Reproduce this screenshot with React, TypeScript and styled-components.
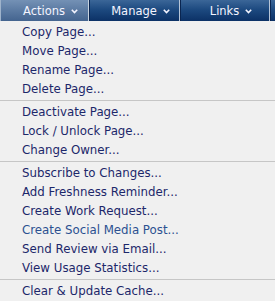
import React from "react";
import styled, { createGlobalStyle } from "styled-components";

const Global = createGlobalStyle`
  html, body { margin: 0; padding: 0; background: #f0f0f0; }
  body { font-family: "DejaVu Sans", Verdana, sans-serif; }
`;

const Page = styled.div`
  width: 275px;
  height: 301px;
  overflow: hidden;
  display: flex;
  flex-direction: column;
  background: #f0f0f0;
`;

const TabBar = styled.div`
  display: flex;
  height: 21px;
  background: #0b2a58;
  flex-shrink: 0;
`;

const Tab = styled.div<{ $active?: boolean; $w: number; $first?: boolean }>`
  box-sizing: border-box;
  width: ${(p) => p.$w}px;
  flex-shrink: 0;
  height: 21px;
  display: flex;
  align-items: center;
  justify-content: center;
  gap: 6px;
  padding-left: 12px;
  font-size: 11.5px;
  color: #f4f4ff;
  border-left: 1px solid ${(p) => (p.$first ? "#9fb3cb" : "#0a2550")};
  border-right: 1px solid ${(p) => (p.$active ? "#c5d1df" : "#b7c6d9")};
  background: ${(p) =>
    p.$active
      ? "linear-gradient(to bottom, #7491b5 0%, #5b7aa2 50%, #44648f 100%)"
      : "linear-gradient(to bottom, #3b6698 0%, #1d4a80 45%, #0c3166 100%)"};
`;

const Chevron = () => (
  <svg width="7" height="5" viewBox="0 0 7 5" style={{ marginTop: 2 }}>
    <polyline points="0.8,0.8 3.5,3.5 6.2,0.8" fill="none" stroke="#f4f4ff" strokeWidth="1.6" />
  </svg>
);

const Menu = styled.div`
  flex: 1;
  display: flex;
  flex-direction: column;
  padding-top: 2px;
  border-bottom: 1px solid #6e6e6e;
`;

const Item = styled.div<{ $alt?: boolean }>`
  height: 19px;
  line-height: 19px;
  padding-left: 22px;
  font-size: 11.8px;
  color: ${(p) => (p.$alt ? "#2c5090" : "#1c276a")};
  white-space: nowrap;
`;

const Sep = styled.div`
  height: 1px;
  margin: 1px 0 2px;
  background: #c6c6c6;
`;

const groups: { label: string; alt?: boolean }[][] = [
  [
    { label: "Copy Page..." },
    { label: "Move Page..." },
    { label: "Rename Page..." },
    { label: "Delete Page..." },
  ],
  [
    { label: "Deactivate Page..." },
    { label: "Lock / Unlock Page..." },
    { label: "Change Owner..." },
  ],
  [
    { label: "Subscribe to Changes..." },
    { label: "Add Freshness Reminder..." },
    { label: "Create Work Request..." },
    { label: "Create Social Media Post...", alt: true },
    { label: "Send Review via Email..." },
    { label: "View Usage Statistics..." },
  ],
  [{ label: "Clear & Update Cache..." }],
];

export default function App() {
  return (
    <Page>
      <Global />
      <TabBar>
        <Tab $active $first $w={89}>
          <span>Actions</span>
          <Chevron />
        </Tab>
        <Tab $w={91}>
          <span>Manage</span>
          <Chevron />
        </Tab>
        <Tab $w={90}>
          <span>Links</span>
          <Chevron />
        </Tab>
        <Tab $w={30} />
      </TabBar>
      <Menu>
        {groups.map((g, gi) => (
          <React.Fragment key={gi}>
            {gi > 0 && <Sep />}
            {g.map((it) => (
              <Item key={it.label} $alt={it.alt}>
                {it.label}
              </Item>
            ))}
          </React.Fragment>
        ))}
      </Menu>
    </Page>
  );
}
